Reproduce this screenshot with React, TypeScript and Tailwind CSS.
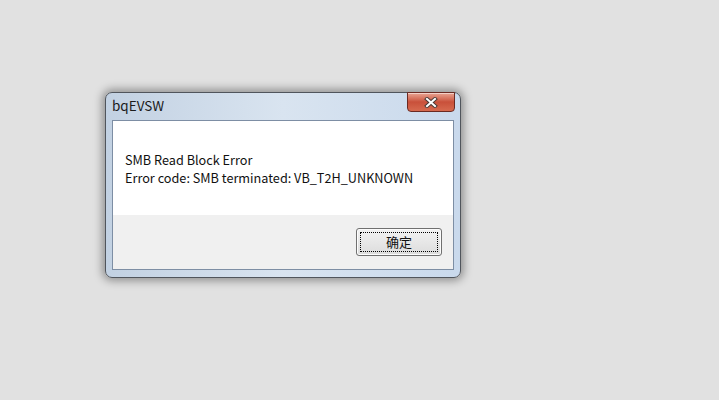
export default function App() {
  return (
    <div className="h-[400px] w-full bg-[#e1e1e1] pl-[105px] pt-[92px] font-['Noto_Sans_CJK_SC',sans-serif]">
      {/* dialog window */}
      <div className="relative flex h-[186px] w-[356px] flex-col rounded-[7px] border border-[#50555c] bg-gradient-to-r from-[#c2d1e2] via-[#d9e4f0] to-[#c9d9ec] shadow-[0_0_9px_3px_rgba(0,0,0,0.35)]">
        <div className="flex h-[27px] items-start pl-[6px] pt-[3px] text-[13.5px] leading-[18px] text-[#1b1b1b]">bqEVSW</div>

        {/* close button */}
        <div className="absolute right-[5px] top-[-1px] flex h-[20px] w-[48px] items-center justify-center rounded-b-[4px] border border-[#6b2a22] bg-gradient-to-b from-[#e8a493] via-[#c9503a] to-[#d66a4f] shadow-[inset_0_1px_0_rgba(255,255,255,0.5)]">
          <svg width="14" height="11" viewBox="0 0 14 11">
            <path d="M3 2 L11 9 M11 2 L3 9" stroke="#4a3a36" strokeWidth="4" strokeLinecap="square" />
            <path d="M3 2 L11 9 M11 2 L3 9" stroke="#ffffff" strokeWidth="2" strokeLinecap="square" />
          </svg>
        </div>

        {/* client area */}
        <div className="mx-[6px] flex flex-1 flex-col border border-[#7d8ea4] bg-white">
          <div className="h-[94px] px-[12px] pt-[30px] text-[12.7px] leading-[18px] text-[#111]">
            <div>SMB Read Block Error</div>
            <div>Error code: SMB terminated: VB_T2H_UNKNOWN</div>
          </div>
          <div className="flex flex-1 items-start justify-end bg-[#f0f0f0] pr-[11px] pt-[13px]">
            <div className="flex h-[28px] w-[86px] items-center justify-center rounded-[3px] border border-[#707070] bg-gradient-to-b from-[#f2f2f2] to-[#dcdcdc] p-[3px] shadow-[inset_0_0_0_1px_#fcfcfc]">
              <div className="flex h-full w-full items-center justify-center border border-dotted border-black text-[13px] text-[#111]">
                确定
              </div>
            </div>
          </div>
        </div>
        <div className="h-[7px]" />
      </div>
    </div>
  )
}
